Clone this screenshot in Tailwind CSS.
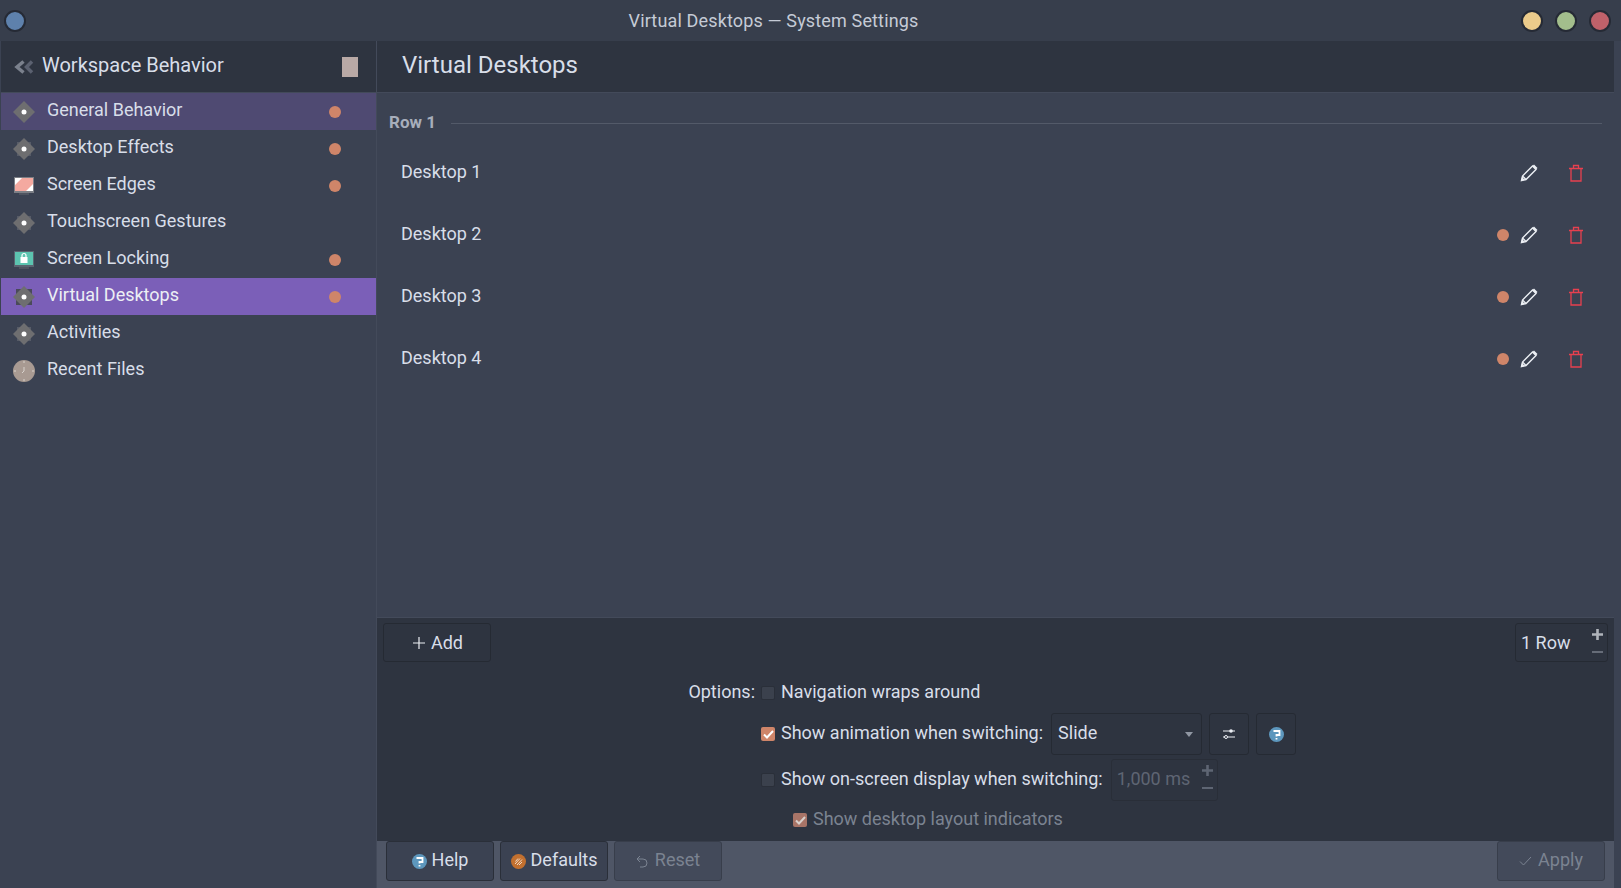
<!DOCTYPE html>
<html lang="en">
<head>
  <meta charset="UTF-8">
  <title>Virtual Desktops — System Settings</title>
  <script src="https://cdn.jsdelivr.net/npm/@tailwindcss/browser@4"></script>
</head>
<body class="bg-[#3b4252] text-[#d8dee9] font-['Roboto',sans-serif] text-[18px] w-[1621px] h-[888px] overflow-hidden flex flex-col">

  <!-- Titlebar -->
  <div class="h-[41px] shrink-0 bg-[#373e4c] flex items-center pl-[4px] pr-[10px]">
    <div class="w-[22px] h-[22px] rounded-full bg-[#5e81ac] border-[2px] border-[#252a35]"></div>
    <div class="flex-1 text-center text-[#c5cbd6] text-[18px] tracking-[0.15px] leading-none">Virtual Desktops — System Settings</div>
    <div class="flex gap-[12px]">
      <div class="w-[22px] h-[22px] rounded-full bg-[#ebcb8b] border-[2px] border-[#252a35]"></div>
      <div class="w-[22px] h-[22px] rounded-full bg-[#a3be8c] border-[2px] border-[#252a35]"></div>
      <div class="w-[22px] h-[22px] rounded-full bg-[#bf616a] border-[2px] border-[#252a35]"></div>
    </div>
  </div>

  <div class="flex flex-1 min-h-0 pl-[1px] pr-[7px]">
    <!-- Sidebar -->
    <aside class="w-[376px] shrink-0 border-r border-[#434a5a] flex flex-col">
      <div class="h-[52px] bg-[#2e3440] border-b border-[#434a5a] flex items-center pl-[13px] pr-[18px]">
        <svg width="20" height="14" viewBox="0 0 20 14" class="mt-[1px]"><path d="M18 1.500 12.500 7l5.500 5.500" fill="none" stroke="#5b6170" stroke-width="3.500"/><path d="M9.500 1.500 3 7l6.500 5.500" fill="none" stroke="#7b818d" stroke-width="3.500"/></svg>
        <span class="ml-[8px] text-[20px] leading-none mb-[4px]">Workspace Behavior</span>
        <div class="ml-auto w-[16px] h-[20px] bg-[#b9a9a6]"></div>
      </div>

      <div class="h-[37px] bg-[#4f4a72] flex items-center pl-[12px] pr-[35px]">
        <svg width="22" height="22" viewBox="0 0 22 22"><path d="M11 0 22 11 11 22 0 11Z" fill="#6e6e70"/><circle cx="11" cy="11" r="2.500" fill="#fff"/></svg>
        <span class="ml-[12px] flex-1 leading-none mb-[3px]">General Behavior</span>
        <div class="w-[12px] h-[12px] rounded-full bg-[#cf8569]"></div>
      </div>
      <div class="h-[37px] flex items-center pl-[12px] pr-[35px]">
        <svg width="22" height="22" viewBox="0 0 22 22"><rect x="4" y="4" width="14" height="14" fill="#565b67"/><path d="M11 0 22 11 11 22 0 11Z" fill="#6e6e70"/><circle cx="11" cy="11" r="2.500" fill="#fff"/></svg>
        <span class="ml-[12px] flex-1 leading-none mb-[3px]">Desktop Effects</span>
        <div class="w-[12px] h-[12px] rounded-full bg-[#cf8569]"></div>
      </div>
      <div class="h-[37px] flex items-center pl-[12px] pr-[35px]">
        <svg width="22" height="22" viewBox="0 0 22 22"><path d="M6 18h10v2H6Z" fill="#4f5460"/><rect x="1" y="2" width="20" height="16" fill="#7c7f86"/><rect x="2" y="3" width="18" height="13" fill="#f4a9a0"/><path d="M2 3h7l-7 7ZM20 16h-7l7-7Z" fill="#fff"/></svg>
        <span class="ml-[12px] flex-1 leading-none mb-[3px]">Screen Edges</span>
        <div class="w-[12px] h-[12px] rounded-full bg-[#cf8569]"></div>
      </div>
      <div class="h-[37px] flex items-center pl-[12px] pr-[35px]">
        <svg width="22" height="22" viewBox="0 0 22 22"><rect x="4" y="4" width="14" height="14" fill="#565b67"/><path d="M11 0 22 11 11 22 0 11Z" fill="#6e6e70"/><circle cx="11" cy="11" r="2.500" fill="#fff"/></svg>
        <span class="ml-[12px] flex-1 leading-none mb-[3px]">Touchscreen Gestures</span>
      </div>
      <div class="h-[37px] flex items-center pl-[12px] pr-[35px]">
        <svg width="22" height="22" viewBox="0 0 22 22"><path d="M6 18h10v2H6Z" fill="#4f5460"/><rect x="1" y="2" width="20" height="16" fill="#5a6470"/><rect x="2" y="3" width="18" height="13" fill="#5cc4b0"/><rect x="7.500" y="8" width="7" height="6" fill="#fff"/><path d="M9 8V6.500a2 2 0 0 1 4 0V8" fill="none" stroke="#fff" stroke-width="1.200"/></svg>
        <span class="ml-[12px] flex-1 leading-none mb-[3px]">Screen Locking</span>
        <div class="w-[12px] h-[12px] rounded-full bg-[#cf8569]"></div>
      </div>
      <div class="h-[37px] bg-[#7b5fb8] flex items-center pl-[12px] pr-[35px] text-[#eceff4]">
        <svg width="22" height="22" viewBox="0 0 22 22"><rect x="3" y="3" width="16" height="16" fill="#4a4a5a"/><path d="M11 0 22 11 11 22 0 11Z" fill="#6e6e70"/><circle cx="11" cy="11" r="2.500" fill="#fff"/></svg>
        <span class="ml-[12px] flex-1 leading-none mb-[3px]">Virtual Desktops</span>
        <div class="w-[12px] h-[12px] rounded-full bg-[#cf8569]"></div>
      </div>
      <div class="h-[37px] flex items-center pl-[12px] pr-[35px]">
        <svg width="22" height="22" viewBox="0 0 22 22"><rect x="4" y="4" width="14" height="14" fill="#565b67"/><path d="M11 0 22 11 11 22 0 11Z" fill="#6e6e70"/><circle cx="11" cy="11" r="2.500" fill="#fff"/></svg>
        <span class="ml-[12px] flex-1 leading-none mb-[3px]">Activities</span>
      </div>
      <div class="h-[37px] flex items-center pl-[12px] pr-[35px]">
        <svg width="22" height="22" viewBox="0 0 22 22"><circle cx="11" cy="11" r="11" fill="#a89a92"/><path d="M11 11 9 13M11 11V7M11 1v2M11 19v2M1 11h2M19 11h2" stroke="#d8d2cc" stroke-width="1" fill="none"/></svg>
        <span class="ml-[12px] flex-1 leading-none mb-[3px]">Recent Files</span>
      </div>
    </aside>

    <!-- Main -->
    <main class="flex-1 min-w-0 flex flex-col">
      <div class="h-[52px] shrink-0 bg-[#2e3440] border-b border-[#434a5a] flex items-center pl-[25px]">
        <h1 class="text-[24px] leading-none mb-[4px]">Virtual Desktops</h1>
      </div>

      <div class="h-[524px] shrink-0">
        <div class="h-[60px] flex items-center pl-[12px] pr-[12px] text-[#a7aebb] font-bold text-[17px] -mt-[1px]">
          <span class="leading-none">Row 1</span>
          <div class="ml-[15px] flex-1 h-px bg-[#535a69] mt-[2px]"></div>
        </div>
        <div class="h-[62px] -mt-[10px] flex items-center pl-[24px] pr-[30px]">
          <span class="flex-1 leading-none mb-[3px]">Desktop 1</span>
          <svg width="18" height="18" viewBox="0 0 18 18" class="mr-[30px]"><path d="M1.500 16.500 2.500 12 12.500 2 16 5.500 6 15.500ZM2.500 12 6 15.500" fill="none" stroke="#eceff4" stroke-width="1.400"/><path d="M12.500 2 14 .5 17.500 4 16 5.500Z" fill="#eceff4"/><path d="M1 17 2 13 5 16Z" fill="#eceff4"/></svg>
          <svg width="16" height="18" viewBox="0 0 16 18"><path d="M1 4.500h14M3 4.500V17h10V4.500M5.500 4.500V1.500h5v3" fill="none" stroke="#e8404f" stroke-width="1.300"/></svg>
        </div>
        <div class="h-[62px] flex items-center pl-[24px] pr-[30px]">
          <span class="flex-1 leading-none mb-[3px]">Desktop 2</span>
          <div class="w-[12px] h-[12px] rounded-full bg-[#cf8569] mr-[11px]"></div>
          <svg width="18" height="18" viewBox="0 0 18 18" class="mr-[30px]"><path d="M1.500 16.500 2.500 12 12.500 2 16 5.500 6 15.500ZM2.500 12 6 15.500" fill="none" stroke="#eceff4" stroke-width="1.400"/><path d="M12.500 2 14 .5 17.500 4 16 5.500Z" fill="#eceff4"/><path d="M1 17 2 13 5 16Z" fill="#eceff4"/></svg>
          <svg width="16" height="18" viewBox="0 0 16 18"><path d="M1 4.500h14M3 4.500V17h10V4.500M5.500 4.500V1.500h5v3" fill="none" stroke="#e8404f" stroke-width="1.300"/></svg>
        </div>
        <div class="h-[62px] flex items-center pl-[24px] pr-[30px]">
          <span class="flex-1 leading-none mb-[3px]">Desktop 3</span>
          <div class="w-[12px] h-[12px] rounded-full bg-[#cf8569] mr-[11px]"></div>
          <svg width="18" height="18" viewBox="0 0 18 18" class="mr-[30px]"><path d="M1.500 16.500 2.500 12 12.500 2 16 5.500 6 15.500ZM2.500 12 6 15.500" fill="none" stroke="#eceff4" stroke-width="1.400"/><path d="M12.500 2 14 .5 17.500 4 16 5.500Z" fill="#eceff4"/><path d="M1 17 2 13 5 16Z" fill="#eceff4"/></svg>
          <svg width="16" height="18" viewBox="0 0 16 18"><path d="M1 4.500h14M3 4.500V17h10V4.500M5.500 4.500V1.500h5v3" fill="none" stroke="#e8404f" stroke-width="1.300"/></svg>
        </div>
        <div class="h-[62px] flex items-center pl-[24px] pr-[30px]">
          <span class="flex-1 leading-none mb-[3px]">Desktop 4</span>
          <div class="w-[12px] h-[12px] rounded-full bg-[#cf8569] mr-[11px]"></div>
          <svg width="18" height="18" viewBox="0 0 18 18" class="mr-[30px]"><path d="M1.500 16.500 2.500 12 12.500 2 16 5.500 6 15.500ZM2.500 12 6 15.500" fill="none" stroke="#eceff4" stroke-width="1.400"/><path d="M12.500 2 14 .5 17.500 4 16 5.500Z" fill="#eceff4"/><path d="M1 17 2 13 5 16Z" fill="#eceff4"/></svg>
          <svg width="16" height="18" viewBox="0 0 16 18"><path d="M1 4.500h14M3 4.500V17h10V4.500M5.500 4.500V1.500h5v3" fill="none" stroke="#e8404f" stroke-width="1.300"/></svg>
        </div>
      </div>

      <!-- Bottom panel -->
      <div class="h-[224px] shrink-0 bg-[#2e3440] border-t border-[#434a5a] flex flex-col">
        <div class="flex justify-between items-start pt-[5px] pl-[6px] pr-[6px]">
          <button class="w-[108px] h-[39px] border border-[#252a33] rounded-[3px] flex items-center justify-center gap-[5px]">
            <svg width="14" height="14" viewBox="0 0 14 14" class="ml-[1px]"><path d="M7 1v12M1 7h12" stroke="#eceff4" stroke-width="1.200"/></svg>
            <span class="leading-none">Add</span>
          </button>
          <div class="w-[93px] h-[39px] border border-[#252a33] rounded-[3px] flex items-center pl-[5px] pr-[4px]">
            <span class="flex-1 leading-none">1 Row</span>
            <div class="flex flex-col gap-[11px] mb-[4px]">
              <svg width="11" height="11" viewBox="0 0 11 11"><path d="M5.500 0v11M0 5.500h11" stroke="#b0b4bb" stroke-width="2.600"/></svg>
              <svg width="11" height="2" viewBox="0 0 11 2"><path d="M0 1h11" stroke="#666c78" stroke-width="2"/></svg>
            </div>
          </div>
        </div>

        <div class="ml-[311px] mt-[17px]">
          <div class="flex items-center h-[28px]">
            <span class="w-[67px] text-right leading-none mb-[2px] whitespace-nowrap">Options:</span>
            <div class="ml-[6px] w-[14px] h-[14px] bg-[#3b414d] border border-[#2a2f39] rounded-[2px]"></div>
            <span class="ml-[6px] leading-none mb-[2px]">Navigation wraps around</span>
          </div>
          <div class="flex items-center h-[42px] mt-[6px] ml-[73px]">
            <div class="w-[14px] h-[14px] bg-[#cf8569] rounded-[2px] flex items-center justify-center">
              <svg width="11" height="9" viewBox="0 0 11 9"><path d="M1 4.500 4 7.500 10 1" fill="none" stroke="#fff" stroke-width="2"/></svg>
            </div>
            <span class="ml-[6px] leading-none mb-[2px] whitespace-nowrap">Show animation when switching:</span>
            <div class="ml-[8px] w-[151px] h-[42px] border border-[#252a33] rounded-[3px] flex items-center pl-[6px] pr-[8px]">
              <span class="flex-1 leading-none mb-[2px]">Slide</span>
              <svg width="8" height="5" viewBox="0 0 8 5"><path d="M0 0h8L4 5Z" fill="#9097a3"/></svg>
            </div>
            <button class="ml-[7px] w-[40px] h-[42px] border border-[#252a33] rounded-[3px] flex items-center justify-center">
              <svg width="14" height="12" viewBox="0 0 14 12"><path d="M1 3h12M1 9h12" stroke="#eceff4" stroke-width="1"/><circle cx="9" cy="3" r="1.800" fill="#eceff4"/><circle cx="4" cy="9" r="1.500" fill="#2e3440" stroke="#eceff4"/></svg>
            </button>
            <button class="ml-[7px] w-[40px] h-[42px] border border-[#252a33] rounded-[3px] flex items-center justify-center">
              <svg width="15" height="15" viewBox="0 0 15 15"><circle cx="7.500" cy="7.500" r="7.500" fill="#5d97bd"/><path d="M4.500 4h6v4h-3v1.500M7.500 11v1.500" fill="none" stroke="#fff" stroke-width="1.800"/></svg>
            </button>
          </div>
          <div class="flex items-center h-[42px] mt-[4px] ml-[73px]">
            <div class="w-[14px] h-[14px] bg-[#3b414d] border border-[#2a2f39] rounded-[2px]"></div>
            <span class="ml-[6px] leading-none mb-[2px] whitespace-nowrap">Show on-screen display when switching:</span>
            <div class="ml-[8px] w-[107px] h-[42px] border border-[#292e38] rounded-[3px] flex items-center pl-[5px] pr-[4px] text-[#5e6573]">
              <span class="flex-1 leading-none mb-[2px] whitespace-nowrap">1,000 ms</span>
              <div class="flex flex-col gap-[11px] mb-[6px]">
                <svg width="11" height="11" viewBox="0 0 11 11"><path d="M5.500 0v11M0 5.500h11" stroke="#5e6573" stroke-width="2.600"/></svg>
                <svg width="11" height="2" viewBox="0 0 11 2"><path d="M0 1h11" stroke="#5e6573" stroke-width="2"/></svg>
              </div>
            </div>
          </div>
          <div class="flex items-center h-[28px] mt-[5px] ml-[105px] text-[#7b8391]">
            <div class="w-[14px] h-[14px] bg-[#a87467] rounded-[2px] flex items-center justify-center">
              <svg width="11" height="9" viewBox="0 0 11 9"><path d="M1 4.500 4 7.500 10 1" fill="none" stroke="#d8d0cc" stroke-width="2"/></svg>
            </div>
            <span class="ml-[6px] leading-none mb-[2px] whitespace-nowrap">Show desktop layout indicators</span>
          </div>
        </div>
      </div>

      <!-- Footer -->
      <div class="h-[48px] shrink-0 bg-[#4f5666] flex items-start pl-[9px] pr-[9px] gap-[6px]">
        <button class="w-[108px] h-[40px] bg-[#3b4252] border border-[#2a2f39] rounded-[3px] flex items-center justify-center gap-[5px]">
          <svg width="15" height="15" viewBox="0 0 15 15"><circle cx="7.500" cy="7.500" r="7.500" fill="#5d97bd"/><path d="M4.500 4h6v4h-3v1.500M7.500 11v1.500" fill="none" stroke="#fff" stroke-width="1.800"/></svg>
          <span class="leading-none mb-[2px]">Help</span>
        </button>
        <button class="w-[108px] h-[40px] bg-[#3b4252] border border-[#2a2f39] rounded-[3px] flex items-center justify-center gap-[5px]">
          <svg width="15" height="15" viewBox="0 0 15 15"><circle cx="7.500" cy="7.500" r="7.500" fill="#c2702f"/><path d="M4 10 9 4.500M6 11l5-5.500M4.500 7.500 7 4.500M8 11l3-3" stroke="#f0d8c4" stroke-width="1"/></svg>
          <span class="leading-none mb-[2px]">Defaults</span>
        </button>
        <button class="w-[108px] h-[40px] bg-[#434a5a] border border-[#383e4b] rounded-[3px] flex items-center justify-center gap-[7px] text-[#7b8391]">
          <svg width="12" height="13" viewBox="0 0 12 13"><path d="M4 1 1 4l3 3M1 4h6a4 4 0 0 1 0 8H4" fill="none" stroke="#7b8391" stroke-width="1"/></svg>
          <span class="leading-none mb-[2px]">Reset</span>
        </button>
        <button class="ml-auto w-[108px] h-[40px] bg-[#434a5a] border border-[#383e4b] rounded-[3px] flex items-center justify-center gap-[6px] text-[#7b8391]">
          <svg width="13" height="10" viewBox="0 0 13 10"><path d="M1 5.500 4.500 9 12 1" fill="none" stroke="#7b8391" stroke-width="1"/></svg>
          <span class="leading-none mb-[2px]">Apply</span>
        </button>
      </div>
    </main>
  </div>
</body>
</html>
